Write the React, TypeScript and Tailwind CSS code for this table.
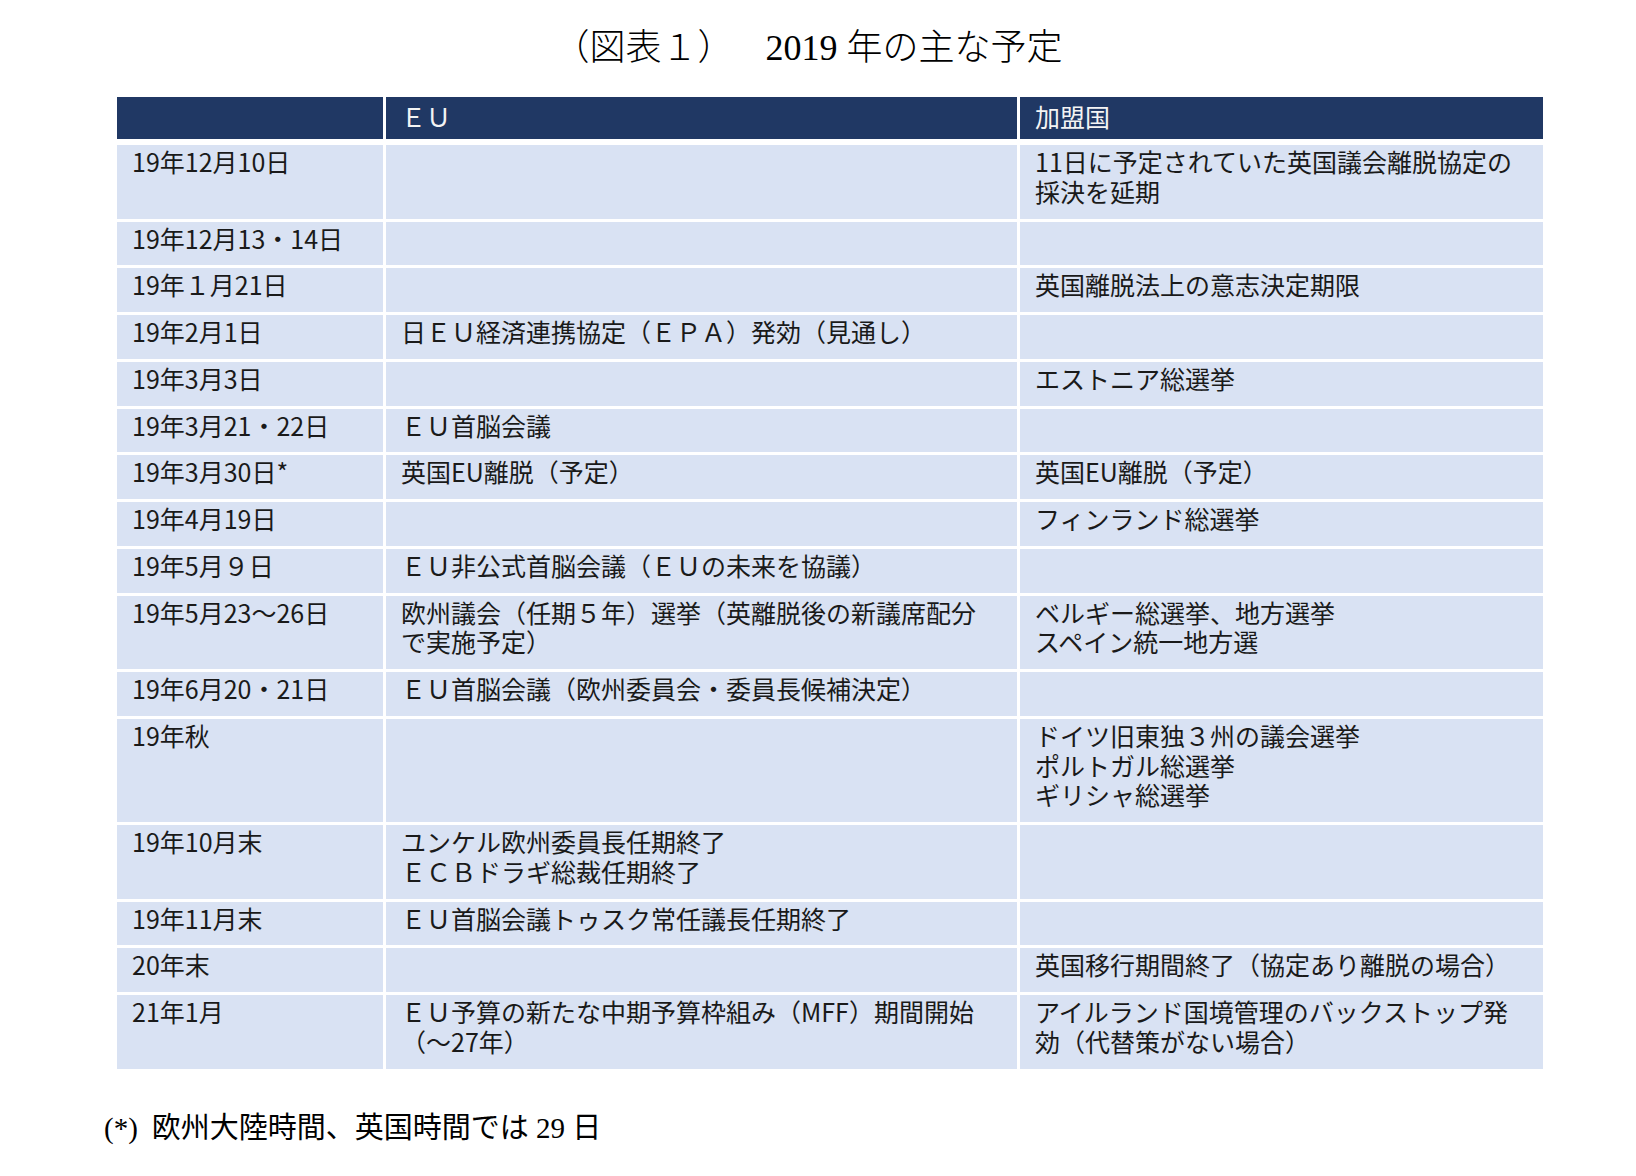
import React from 'react';

const header = ['', 'ＥＵ', '加盟国'];

const rows: [string, string, string][] = [
  ['19年12月10日', '', '11日に予定されていた英国議会離脱協定の\n採決を延期'],
  ['19年12月13・14日', '', ''],
  ['19年１月21日', '', '英国離脱法上の意志決定期限'],
  ['19年2月1日', '日ＥＵ経済連携協定（ＥＰＡ）発効（見通し）', ''],
  ['19年3月3日', '', 'エストニア総選挙'],
  ['19年3月21・22日', 'ＥＵ首脳会議', ''],
  ['19年3月30日*', '英国EU離脱（予定）', '英国EU離脱（予定）'],
  ['19年4月19日', '', 'フィンランド総選挙'],
  ['19年5月９日', 'ＥＵ非公式首脳会議（ＥＵの未来を協議）', ''],
  ['19年5月23～26日', '欧州議会（任期５年）選挙（英離脱後の新議席配分\nで実施予定）', 'ベルギー総選挙、地方選挙\nスペイン統一地方選'],
  ['19年6月20・21日', 'ＥＵ首脳会議（欧州委員会・委員長候補決定）', ''],
  ['19年秋', '', 'ドイツ旧東独３州の議会選挙\nポルトガル総選挙\nギリシャ総選挙'],
  ['19年10月末', 'ユンケル欧州委員長任期終了\nＥＣＢドラギ総裁任期終了', ''],
  ['19年11月末', 'ＥＵ首脳会議トゥスク常任議長任期終了', ''],
  ['20年末', '', '英国移行期間終了（協定あり離脱の場合）'],
  ['21年1月', 'ＥＵ予算の新たな中期予算枠組み（MFF）期間開始\n（～27年）', 'アイルランド国境管理のバックストップ発\n効（代替策がない場合）'],
];

const App = () => {
  return (
    <div className="min-h-[1176px] bg-white">
      {/* Title */}
      <h1 className="pt-[28px] pr-[20px] text-center text-[36px] leading-[40px] font-light text-black font-['Liberation_Serif','Noto_Sans_CJK_JP',serif]">
        <span>（図表１）</span>
        <span className="ml-[32px]">2019 年の主な予定</span>
      </h1>

      {/* Schedule table */}
      <div className="ml-[117px] mt-[29px] grid w-[1426px] grid-cols-[266px_631px_523px] gap-[3px] text-[25px] text-[#1a1a1a] font-['Noto_Sans_CJK_JP',sans-serif]">
        {header.map((h, i) => (
          <div
            key={`h${i}`}
            className="mb-[3px] flex h-[42px] items-center bg-[#203864] px-[15px] pb-[3px] text-[#f4f4f4]"
          >
            {h}
          </div>
        ))}
        {rows.map((row, r) =>
          row.map((cell, c) => (
            <div
              key={`${r}-${c}`}
              className="whitespace-pre-line bg-[#d9e2f3] pl-[15px] pr-[8px] pt-[2px] pb-[12px] leading-[29.75px]"
            >
              {cell}
            </div>
          ))
        )}
      </div>

      {/* Footnote */}
      <p className="ml-[104px] mt-[41px] text-[29px] leading-[36px] text-black font-['Liberation_Serif','Noto_Sans_CJK_JP',serif]">
        (*)<span className="ml-[14px]">欧州大陸時間、英国時間では 29 日</span>
      </p>
    </div>
  );
};

export default App;
